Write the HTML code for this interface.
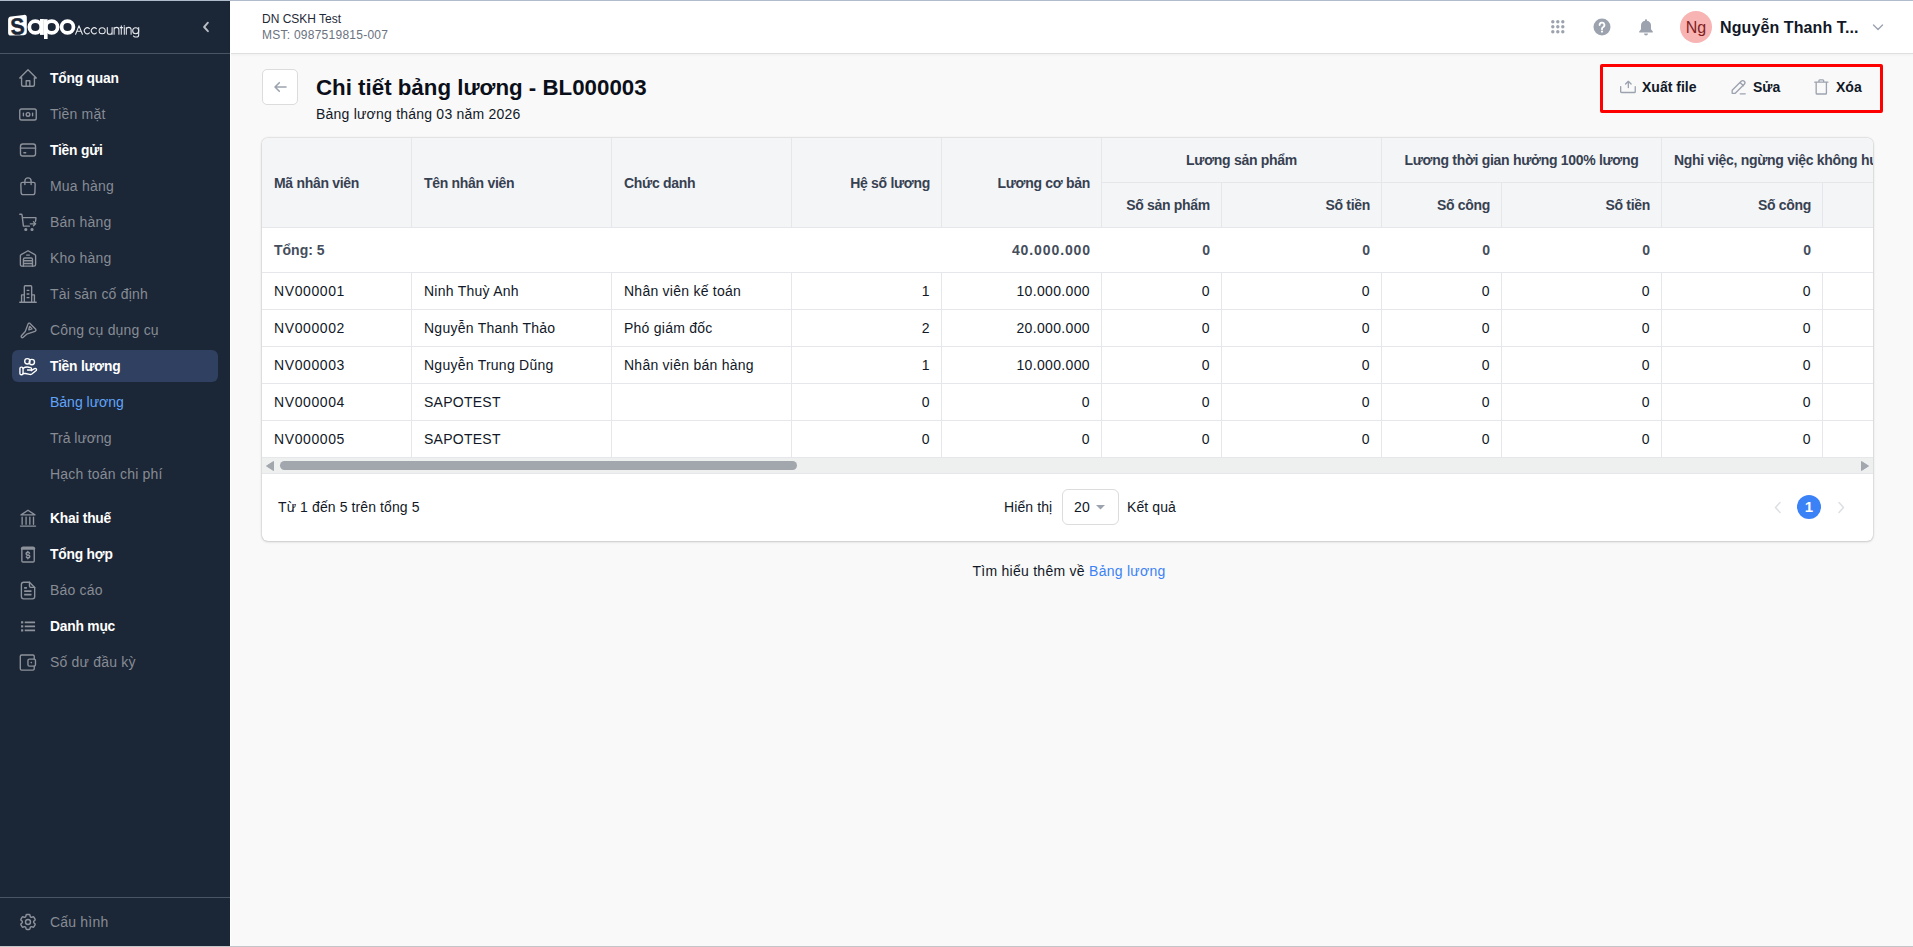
<!DOCTYPE html>
<html><head><meta charset="utf-8">
<style>
*{box-sizing:border-box;margin:0;padding:0}
html,body{width:1913px;height:947px;overflow:hidden}
body{font-family:"Liberation Sans",sans-serif;background:#f9f9f9;position:relative;color:#111827}
.abs{position:absolute}
.topline{position:absolute;left:0;top:0;width:1913px;height:1px;background:#b0bccc;z-index:10}
#sb{position:absolute;left:0;top:0;width:230px;height:947px;background:#1b2636}
#sb .logo{position:absolute;left:0;top:0;width:230px;height:54px;border-bottom:1px solid #4b5462}
#sb .item{position:absolute;left:12px;width:206px;height:32px;border-radius:6px}
#sb .item svg{position:absolute;left:5px;top:4.5px;width:22px;height:22px;fill:none;stroke:#8d929b;stroke-width:1.5;stroke-linecap:round;stroke-linejoin:round}
#sb .item span{position:absolute;left:38px;top:8px;font-size:14px;line-height:16px;white-space:nowrap}
#sb .w span{color:#fff;font-weight:700;font-size:13.8px;letter-spacing:-0.2px;top:8.6px}
#sb .g span{color:#878c95;letter-spacing:0.2px}
#sb .act{background:#2f4060}
#sb .act svg{stroke:#fff}
#sb .sub span{color:#878c95;left:38px}
#sb .sub.on span{color:#60a5fa}
#hd{position:absolute;left:230px;top:0;width:1683px;height:54px;background:#fff;border-bottom:1px solid #dfdfdf;border-left:1px solid #fff;box-shadow:0 1px 3px rgba(0,0,0,.045)}

#main .ic{fill:none;stroke:#9ca3af;stroke-width:1.6;stroke-linecap:round;stroke-linejoin:round}
#main .act{top:78px;font-size:14px;line-height:18px;font-weight:700;color:#111827;white-space:nowrap}

#card{background:#fff;border-radius:6px;overflow:hidden;box-shadow:0 0 2px rgba(0,0,0,.28),0 1px 3px rgba(0,0,0,.12)}
#card .bd{background:#e5e7eb}
#card .th{font-size:14px;line-height:18px;font-weight:700;color:#374151;white-space:nowrap;letter-spacing:-0.3px}
#card .tt{font-size:14px;line-height:18px;font-weight:700;color:#454e5c;white-space:nowrap}
#card .td{font-size:14px;line-height:18px;color:#111827;white-space:nowrap;letter-spacing:0.25px}
#card .nv{letter-spacing:0.6px}
#card .nm{letter-spacing:0.35px}
#card .ft{font-size:14px;line-height:18px;color:#111827;white-space:nowrap;letter-spacing:0.1px}
</style></head><body>
<div class="topline"></div>
<div class="abs" style="left:230px;top:0;width:1px;height:947px;background:#fff;z-index:5"></div>
<div class="abs" style="left:0;top:946px;width:1913px;height:1px;background:#c2c6c9;z-index:10"></div>
<div id="sb">
  <div class="logo">
    <svg class="abs" style="left:0;top:0" width="80" height="45" viewBox="0 0 80 45">
      <path d="M11.1 16.6 L23.8 14.9 Q26.8 14.5 26.8 17.5 L26.8 32.1 Q26.8 35.1 23.8 35.2 L11.1 35.6 Q8.1 35.7 8.1 32.7 L8.1 19.7 Q8.1 17 11.1 16.6 Z" fill="#fff"/>
      <text x="9.8" y="34.3" font-family="Liberation Sans" font-weight="700" font-size="23" fill="#1b2636" stroke="#1b2636" stroke-width="0.5" transform="translate(17 26) rotate(-4) scale(0.92 1) translate(-17 -26)">S</text>
      <g fill="none" stroke="#fff" stroke-width="3.7"><circle cx="35.3" cy="27" r="5.95"/><circle cx="51.7" cy="27" r="5.95"/><circle cx="67.5" cy="27" r="5.95"/></g>
      <rect x="40" y="19" width="3.9" height="15.9" fill="#fff"/><rect x="44" y="19.2" width="3.6" height="19.8" fill="#fff"/>
    </svg>
    <svg class="abs" style="left:70px;top:18px" width="75" height="24" viewBox="70 18 75 24"><g fill="none" stroke="#e9ebef" stroke-width="1.05" stroke-linecap="round" stroke-linejoin="round"><path d="M75.6 34.3L79 25.7l3.4 8.6M76.8 31.3h4.4"/><path d="M89.4 28.6A3 3 0 1 0 89.4 32.9"/><path d="M96.4 28.6A3 3 0 1 0 96.4 32.9"/><circle cx="102.15" cy="30.75" r="3.05"/><path d="M107.3 27.4v4.5a2.4 2.4 0 0 0 4.8 0v-4.5M112.1 31.9v2.4"/><path d="M114.1 34.3v-6.9M114.1 29.8a2.4 2.4 0 0 1 4.8 0v4.5"/><path d="M121.3 25.7v8.6M120.1 27.6h2.5"/><path d="M124.3 27.6v6.7"/><path d="M126.3 34.3v-6.9M126.3 29.8a2.4 2.4 0 0 1 4.8 0v4.5"/><circle cx="135.7" cy="30.75" r="3"/><path d="M138.7 27.4v7.5a2.2 2.2 0 0 1-2.2 2.1h-1.2a2.1 2.1 0 0 1-1.8-1"/></g><circle cx="124.3" cy="25.9" r=".7" fill="#e9ebef"/></svg>
    <svg class="abs" style="left:201px;top:20px" width="10" height="14" viewBox="0 0 10 14"><path d="M6.9 2.7L3.1 7l3.8 4.2" fill="none" stroke="#b9bdc4" stroke-width="1.9" stroke-linecap="round" stroke-linejoin="round"/></svg>
  </div>
<div class="item w" style="top:62px"><svg viewBox="0 0 24 24"><path d="M5 12H3l9-9 9 9h-2"/><path d="M5 12v7a2 2 0 0 0 2 2h10a2 2 0 0 0 2-2v-7"/><path d="M10 21v-6h4v6"/></svg><span>Tổng quan</span></div>
<div class="item g" style="top:98px"><svg viewBox="0 0 24 24"><rect x="3" y="6.5" width="18" height="12" rx="2"/><circle cx="12" cy="12.5" r="2"/><path d="M7 11v3M17 11v3"/></svg><span>Tiền mặt</span></div>
<div class="item w" style="top:134px"><svg viewBox="0 0 24 24"><rect x="3.8" y="5.5" width="16.4" height="13" rx="2.5"/><path d="M3.8 10h16.4M7.5 15h2"/></svg><span>Tiền gửi</span></div>
<div class="item g" style="top:170px"><svg viewBox="0 0 24 24"><path d="M6 8h12a1.8 1.8 0 0 1 1.8 1.8L19.5 19a2.4 2.4 0 0 1-2.4 2.4H6.9A2.4 2.4 0 0 1 4.5 19L4.2 9.8A1.8 1.8 0 0 1 6 8z"/><path d="M8.6 10.4V6.5a3.4 3.4 0 0 1 6.8 0v3.9"/></svg><span>Mua hàng</span></div>
<div class="item g" style="top:206px"><svg viewBox="0 0 24 24"><path d="M3 3.6h1.5a1 1 0 0 1 1 .9L7 16.5h6.5M5.8 7.2h14.4a.5.5 0 0 1 .5.6l-.5 3.5M14.5 14h5.8M18 11.8l2.3 2.2-2.3 2.2"/><circle cx="9.6" cy="20.2" r="1" fill="#8d929b"/><circle cx="16.4" cy="20.2" r="1" fill="#8d929b"/></svg><span>Bán hàng</span></div>
<div class="item g" style="top:242px"><svg viewBox="0 0 24 24"><path d="M3.7 19V9.6a1.5 1.5 0 0 1 .8-1.3L12 4.1l7.5 4.2a1.5 1.5 0 0 1 .8 1.3V19a1.9 1.9 0 0 1-1.9 1.9H5.6A1.9 1.9 0 0 1 3.7 19z"/><path d="M7 20.9V13.5a1.5 1.5 0 0 1 1.5-1.5h6.9a1.5 1.5 0 0 1 1.5 1.5v7.4M7 15h9.9M7 18h9.9M10.5 8.8h3"/></svg><span>Kho hàng</span></div>
<div class="item g" style="top:278px"><svg viewBox="0 0 24 24"><path d="M3 21h18"/><path d="M5 21V13h3M19 21v-8h-3"/><path d="M8 21V4a1 1 0 0 1 1-1h6a1 1 0 0 1 1 1v17"/><path d="M11 8h2M11 12h2M11 16h2"/></svg><span>Tài sản cố định</span></div>
<div class="item g" style="top:314px"><svg viewBox="0 0 24 24"><path d="M14.2 4.8Q12.8 4 12 5.6L9 13.6 4.8 18.3A1.3 1.3 0 0 0 6.5 20.2L10.6 16.6 19.6 13.4Q21.4 12.4 20.2 10.8Z"/><path d="M13.7 8l2.6 2.8-3.4.9z"/></svg><span>Công cụ dụng cụ</span></div>
<div class="item w act" style="top:350px"><svg viewBox="0 0 24 24"><circle cx="11.3" cy="6.9" r="2.9"/><circle cx="16.2" cy="7.7" r="2.9"/><rect x="3.2" y="13.2" width="3.4" height="8.4" rx="1.5"/><path d="M6.6 14.6c2-1.4 4.2-1.8 6.4-1.2l1.8.4a1.3 1.3 0 0 1-.4 2.6H11.5"/><path d="M6.6 20.2h2.6l4.6 1a3 3 0 0 0 2.4-.5l4.8-3.8a1.4 1.4 0 0 0-1.9-2l-3.6 2.2"/></svg><span>Tiền lương</span></div>
<div class="item sub on" style="top:386px"><span>Bảng lương</span></div>
<div class="item sub" style="top:422px"><span>Trả lương</span></div>
<div class="item sub" style="top:458px"><span style="letter-spacing:0.22px">Hạch toán chi phí</span></div>
<div class="item w" style="top:502px"><svg viewBox="0 0 24 24"><path d="M3.8 20.8h16.4M4.4 8.6L12 3.6l7.6 5z"/><path d="M5.6 11v7.8M9.9 11v7.8M14 11v7.8M18 11v7.8"/></svg><span>Khai thuế</span></div>
<div class="item w" style="top:538px"><svg viewBox="0 0 24 24"><rect x="5.3" y="4.6" width="13.5" height="16.1" rx="1.2"/><path d="M5.3 6.1h13.5" stroke-width="2.4"/><path d="M13.6 11.2a1.7 1.7 0 0 0-1.6-1h-.5a1.5 1.5 0 0 0 0 3h.9a1.5 1.5 0 0 1 0 3h-.6a1.7 1.7 0 0 1-1.6-1M11.8 9.2v1M11.8 16.2v1" stroke-width="1.7"/></svg><span>Tổng hợp</span></div>
<div class="item g" style="top:574px"><svg viewBox="0 0 24 24"><path d="M13.6 3.6H7.3a2.5 2.5 0 0 0-2.5 2.5v13.1a2.5 2.5 0 0 0 2.5 2.5h9.5a2.5 2.5 0 0 0 2.5-2.5V9.2z"/><path d="M13.6 3.6v4.1a1.5 1.5 0 0 0 1.5 1.5h4.2"/><path d="M7.8 9.6h3M7.8 13.3h8M7.8 17h8" stroke-width="1.8" stroke-linecap="butt"/></svg><span>Báo cáo</span></div>
<div class="item w" style="top:610px"><svg viewBox="0 0 24 24"><path d="M8.4 8h11.3M8.4 12.4h11.3M8.4 16.8h11.3" stroke-width="2" stroke-linecap="butt"/><g fill="#8d929b" stroke="none"><rect x="4.4" y="6.8" width="2.4" height="2.4"/><rect x="4.4" y="11.2" width="2.4" height="2.4"/><rect x="4.4" y="15.6" width="2.4" height="2.4"/></g></svg><span>Danh mục</span></div>
<div class="item g" style="top:646px"><svg viewBox="0 0 24 24"><path d="M18.8 8.8V5.8a1.5 1.5 0 0 0-1.5-1.5H5.1A1.5 1.5 0 0 0 3.6 5.8v13.5a1.5 1.5 0 0 0 1.5 1.5h12.2a1.5 1.5 0 0 0 1.5-1.5v-2.8"/><rect x="11.95" y="8.8" width="8.2" height="7.7" rx="1.5"/><circle cx="15.6" cy="12.65" r=".9" fill="#8d929b" stroke="none"/></svg><span>Số dư đầu kỳ</span></div>
<div class="item g" style="top:906px"><svg viewBox="0 0 24 24" style="left:6px;top:6px;width:20px;height:20px;stroke-width:1.7"><path d="M9.594 3.94c.09-.542.56-.94 1.11-.94h2.593c.55 0 1.02.398 1.11.94l.213 1.281c.063.374.313.686.645.87.074.04.147.083.22.127.325.196.72.257 1.075.124l1.217-.456a1.125 1.125 0 0 1 1.37.49l1.296 2.247a1.125 1.125 0 0 1-.26 1.431l-1.003.827c-.293.241-.438.613-.43.992a7.723 7.723 0 0 1 0 .255c-.008.378.137.75.43.991l1.004.827c.424.35.534.955.26 1.43l-1.298 2.247a1.125 1.125 0 0 1-1.369.491l-1.217-.456c-.355-.133-.75-.072-1.076.124a6.470 6.470 0 0 1-.22.128c-.331.183-.581.495-.644.869l-.213 1.281c-.09.543-.56.94-1.11.94h-2.594c-.55 0-1.019-.398-1.11-.94l-.213-1.281c-.062-.374-.312-.686-.644-.87a6.520 6.520 0 0 1-.22-.127c-.325-.196-.72-.257-1.076-.124l-1.217.456a1.125 1.125 0 0 1-1.369-.49l-1.297-2.247a1.125 1.125 0 0 1 .26-1.431l1.004-.827c.292-.24.437-.613.43-.991a6.932 6.932 0 0 1 0-.255c.007-.38-.138-.751-.43-.992l-1.004-.827a1.125 1.125 0 0 1-.26-1.430l1.297-2.247a1.125 1.125 0 0 1 1.37-.491l1.216.456c.356.133.751.072 1.076-.124.072-.044.146-.086.22-.128.332-.183.582-.495.644-.869l.214-1.280z"/><circle cx="12" cy="12" r="3"/></svg><span>Cấu hình</span></div>
<div class="abs" style="left:0;top:897px;width:230px;height:1px;background:#4b5462"></div>
</div>
<div id="hd">
  <div class="abs" style="left:31px;top:12px;font-size:12px;line-height:14px;color:#1f2937">DN CSKH Test</div>
  <div class="abs" style="left:31px;top:28px;font-size:12px;line-height:14px;color:#6b7280;letter-spacing:0.25px">MST: 0987519815-007</div>
  <svg class="abs" style="left:1320px;top:20px" width="14" height="14" viewBox="0 0 14 14" fill="#9ca3af"><circle cx="1.8" cy="1.8" r="1.7"/><circle cx="6.8" cy="1.8" r="1.7"/><circle cx="11.8" cy="1.8" r="1.7"/><circle cx="1.8" cy="6.8" r="1.7"/><circle cx="6.8" cy="6.8" r="1.7"/><circle cx="11.8" cy="6.8" r="1.7"/><circle cx="1.8" cy="11.8" r="1.7"/><circle cx="6.8" cy="11.8" r="1.7"/><circle cx="11.8" cy="11.8" r="1.7"/></svg>
  <svg class="abs" style="left:1362px;top:18px" width="18" height="18" viewBox="0 0 18 18"><circle cx="9" cy="9" r="8.5" fill="#9ca3af"/><path d="M6.6 7a2.4 2.4 0 1 1 3.4 2.2c-.6.3-1 .8-1 1.4v.6" fill="none" stroke="#fff" stroke-width="1.8" stroke-linecap="round"/><circle cx="9" cy="13.6" r="1.1" fill="#fff"/></svg>
  <svg class="abs" style="left:1407px;top:18px" width="16" height="18" viewBox="0 0 16 18" fill="#9ca3af"><path d="M8 1.2c.6 0 1 .4 1 1v.5a5 5 0 0 1 4 4.9v3.6l1.8 2.3c.3.4 0 1-.5 1H1.7c-.5 0-.8-.6-.5-1L3 11.2V7.6a5 5 0 0 1 4-4.9v-.5c0-.6.4-1 1-1z"/><path d="M6 15.4h4a2 2 0 0 1-4 0z"/></svg>
  <div class="abs" style="left:1449px;top:11px;width:32px;height:32px;border-radius:50%;background:#f8b3b3;color:#7f1d1d;font-size:16px;line-height:34px;text-align:center">Ng</div>
  <div class="abs" style="left:1489px;top:18px;font-size:16px;line-height:20px;font-weight:700;color:#111827;white-space:nowrap;letter-spacing:0.1px">Nguyễn Thanh T...</div>
  <svg class="abs" style="left:1641px;top:22px" width="12" height="10" viewBox="0 0 12 10"><path d="M1.5 3l4.5 4.5L10.5 3" fill="none" stroke="#9ca3af" stroke-width="1.4" stroke-linecap="round" stroke-linejoin="round"/></svg>
</div>
<div id="main">
  <div class="abs backbtn" style="left:262px;top:69px;width:36px;height:36px;border:1px solid #dcdcdc;border-radius:5px;background:#fff">
    <svg class="abs" style="left:10px;top:10px" width="14" height="14" viewBox="0 0 14 14"><path d="M13 7H2M6.3 2.7L2 7l4.3 4.3" fill="none" stroke="#9ca3af" stroke-width="1.6" stroke-linecap="round" stroke-linejoin="round"/></svg>
  </div>
  <div class="abs" style="left:316px;top:74px;font-size:22.3px;line-height:28px;font-weight:700;color:#0b0f19;white-space:nowrap">Chi tiết bảng lương - BL000003</div>
  <div class="abs" style="left:316px;top:105px;font-size:14px;line-height:18px;color:#111827;white-space:nowrap;letter-spacing:0.22px">Bảng lương tháng 03 năm 2026</div>
  <div class="abs" style="left:1600px;top:64px;width:283px;height:49px;border:3px solid #f00;border-radius:2px"></div>
  <svg class="abs ic" style="left:1618px;top:77px" width="20" height="20" viewBox="0 0 24 24"><path d="M3.2 11.5v6.1a1 1 0 0 0 1 1h15.5a1 1 0 0 0 1-1v-6.1M12.4 12.7V5.2M9.1 8.5l3.3-3.3 3.3 3.3"/></svg>
  <div class="abs act" style="left:1642px">Xuất file</div>
  <svg class="abs ic" style="left:1729px;top:77px" width="20" height="20" viewBox="0 0 24 24"><path d="M4.3 19.6h3.2L18.3 8.8a2.6 2.6 0 0 0-3.7-3.7L3.8 15.9v3.7M13.3 6.5l4 4M13.5 20.2h6"/></svg>
  <div class="abs act" style="left:1753px">Sửa</div>
  <svg class="abs ic" style="left:1811px;top:77px" width="20" height="20" viewBox="0 0 24 24"><path d="M4.5 6.2h15.8M9.5 6.2V4.5a1 1 0 0 1 1-1h3.7a1 1 0 0 1 1 1v1.7M6.2 6.2v13.2a1 1 0 0 0 1 1h10.3a1 1 0 0 0 1-1V6.2"/></svg>
  <div class="abs act" style="left:1836px">Xóa</div>
</div>
<div id="card" class="abs" style="left:262px;top:138px;width:1611px;height:403px">
<div class="abs" style="left:0;top:0;width:1611px;height:90px;background:#f4f5f7"></div>
<div class="abs bd" style="left:0;top:89px;width:1611px;height:1px"></div>
<div class="abs bd" style="left:840px;top:44px;width:771px;height:1px"></div>
<div class="abs bd" style="left:149px;top:0;width:1px;height:89px"></div>
<div class="abs bd" style="left:349px;top:0;width:1px;height:89px"></div>
<div class="abs bd" style="left:529px;top:0;width:1px;height:89px"></div>
<div class="abs bd" style="left:679px;top:0;width:1px;height:89px"></div>
<div class="abs bd" style="left:839px;top:0;width:1px;height:89px"></div>
<div class="abs bd" style="left:959px;top:45px;width:1px;height:44px"></div>
<div class="abs bd" style="left:1119px;top:0;width:1px;height:89px"></div>
<div class="abs bd" style="left:1239px;top:45px;width:1px;height:44px"></div>
<div class="abs bd" style="left:1399px;top:0;width:1px;height:89px"></div>
<div class="abs bd" style="left:1560px;top:45px;width:1px;height:44px"></div>
<div class="abs th" style="left:12px;top:36px;width:449px;text-align:left">Mã nhân viên</div>
<div class="abs th" style="left:162px;top:36px;width:499px;text-align:left">Tên nhân viên</div>
<div class="abs th" style="left:362px;top:36px;width:479px;text-align:left">Chức danh</div>
<div class="abs th" style="left:530px;top:36px;width:138px;text-align:right">Hệ số lương</div>
<div class="abs th" style="left:680px;top:36px;width:148px;text-align:right">Lương cơ bản</div>
<div class="abs th" style="left:840px;top:13px;width:279px;text-align:center">Lương sản phẩm</div>
<div class="abs th" style="left:1120px;top:13px;width:279px;text-align:center">Lương thời gian hưởng 100% lương</div>
<div class="abs th" style="left:1412px;top:13px;width:538px;text-align:left">Nghỉ việc, ngừng việc không hưởng lương</div>
<div class="abs th" style="left:840px;top:58px;width:108px;text-align:right">Số sản phẩm</div>
<div class="abs th" style="left:960px;top:58px;width:148px;text-align:right">Số tiền</div>
<div class="abs th" style="left:1120px;top:58px;width:108px;text-align:right">Số công</div>
<div class="abs th" style="left:1240px;top:58px;width:148px;text-align:right">Số tiền</div>
<div class="abs th" style="left:1400px;top:58px;width:149px;text-align:right">Số công</div>
<div class="abs bd" style="left:0;top:134px;width:1611px;height:1px"></div>
<div class="abs tt" style="left:12px;top:103px">Tổng: 5</div>
<div class="abs tt" style="left:680px;top:103px;width:149px;text-align:right;letter-spacing:0.9px">40.000.000</div>
<div class="abs tt" style="left:840px;top:103px;width:109px;text-align:right;letter-spacing:0.9px">0</div>
<div class="abs tt" style="left:960px;top:103px;width:149px;text-align:right;letter-spacing:0.9px">0</div>
<div class="abs tt" style="left:1120px;top:103px;width:109px;text-align:right;letter-spacing:0.9px">0</div>
<div class="abs tt" style="left:1240px;top:103px;width:149px;text-align:right;letter-spacing:0.9px">0</div>
<div class="abs tt" style="left:1400px;top:103px;width:150px;text-align:right;letter-spacing:0.9px">0</div>
<div class="abs td nv" style="left:12px;top:144px">NV000001</div>
<div class="abs td" style="left:162px;top:144px">Ninh Thuỳ Anh</div>
<div class="abs td" style="left:362px;top:144px">Nhân viên kế toán</div>
<div class="abs td nm" style="left:530px;top:144px;width:138px;text-align:right">1</div>
<div class="abs td nm" style="left:680px;top:144px;width:148px;text-align:right">10.000.000</div>
<div class="abs td nm" style="left:840px;top:144px;width:108px;text-align:right">0</div>
<div class="abs td nm" style="left:960px;top:144px;width:148px;text-align:right">0</div>
<div class="abs td nm" style="left:1120px;top:144px;width:108px;text-align:right">0</div>
<div class="abs td nm" style="left:1240px;top:144px;width:148px;text-align:right">0</div>
<div class="abs td nm" style="left:1400px;top:144px;width:149px;text-align:right">0</div>
<div class="abs bd" style="left:149px;top:135px;width:1px;height:37px"></div>
<div class="abs bd" style="left:349px;top:135px;width:1px;height:37px"></div>
<div class="abs bd" style="left:529px;top:135px;width:1px;height:37px"></div>
<div class="abs bd" style="left:679px;top:135px;width:1px;height:37px"></div>
<div class="abs bd" style="left:839px;top:135px;width:1px;height:37px"></div>
<div class="abs bd" style="left:959px;top:135px;width:1px;height:37px"></div>
<div class="abs bd" style="left:1119px;top:135px;width:1px;height:37px"></div>
<div class="abs bd" style="left:1239px;top:135px;width:1px;height:37px"></div>
<div class="abs bd" style="left:1399px;top:135px;width:1px;height:37px"></div>
<div class="abs bd" style="left:1560px;top:135px;width:1px;height:37px"></div>
<div class="abs bd" style="left:0;top:171px;width:1611px;height:1px"></div>
<div class="abs td nv" style="left:12px;top:181px">NV000002</div>
<div class="abs td" style="left:162px;top:181px">Nguyễn Thanh Thảo</div>
<div class="abs td" style="left:362px;top:181px">Phó giám đốc</div>
<div class="abs td nm" style="left:530px;top:181px;width:138px;text-align:right">2</div>
<div class="abs td nm" style="left:680px;top:181px;width:148px;text-align:right">20.000.000</div>
<div class="abs td nm" style="left:840px;top:181px;width:108px;text-align:right">0</div>
<div class="abs td nm" style="left:960px;top:181px;width:148px;text-align:right">0</div>
<div class="abs td nm" style="left:1120px;top:181px;width:108px;text-align:right">0</div>
<div class="abs td nm" style="left:1240px;top:181px;width:148px;text-align:right">0</div>
<div class="abs td nm" style="left:1400px;top:181px;width:149px;text-align:right">0</div>
<div class="abs bd" style="left:149px;top:172px;width:1px;height:37px"></div>
<div class="abs bd" style="left:349px;top:172px;width:1px;height:37px"></div>
<div class="abs bd" style="left:529px;top:172px;width:1px;height:37px"></div>
<div class="abs bd" style="left:679px;top:172px;width:1px;height:37px"></div>
<div class="abs bd" style="left:839px;top:172px;width:1px;height:37px"></div>
<div class="abs bd" style="left:959px;top:172px;width:1px;height:37px"></div>
<div class="abs bd" style="left:1119px;top:172px;width:1px;height:37px"></div>
<div class="abs bd" style="left:1239px;top:172px;width:1px;height:37px"></div>
<div class="abs bd" style="left:1399px;top:172px;width:1px;height:37px"></div>
<div class="abs bd" style="left:1560px;top:172px;width:1px;height:37px"></div>
<div class="abs bd" style="left:0;top:208px;width:1611px;height:1px"></div>
<div class="abs td nv" style="left:12px;top:218px">NV000003</div>
<div class="abs td" style="left:162px;top:218px">Nguyễn Trung Dũng</div>
<div class="abs td" style="left:362px;top:218px">Nhân viên bán hàng</div>
<div class="abs td nm" style="left:530px;top:218px;width:138px;text-align:right">1</div>
<div class="abs td nm" style="left:680px;top:218px;width:148px;text-align:right">10.000.000</div>
<div class="abs td nm" style="left:840px;top:218px;width:108px;text-align:right">0</div>
<div class="abs td nm" style="left:960px;top:218px;width:148px;text-align:right">0</div>
<div class="abs td nm" style="left:1120px;top:218px;width:108px;text-align:right">0</div>
<div class="abs td nm" style="left:1240px;top:218px;width:148px;text-align:right">0</div>
<div class="abs td nm" style="left:1400px;top:218px;width:149px;text-align:right">0</div>
<div class="abs bd" style="left:149px;top:209px;width:1px;height:37px"></div>
<div class="abs bd" style="left:349px;top:209px;width:1px;height:37px"></div>
<div class="abs bd" style="left:529px;top:209px;width:1px;height:37px"></div>
<div class="abs bd" style="left:679px;top:209px;width:1px;height:37px"></div>
<div class="abs bd" style="left:839px;top:209px;width:1px;height:37px"></div>
<div class="abs bd" style="left:959px;top:209px;width:1px;height:37px"></div>
<div class="abs bd" style="left:1119px;top:209px;width:1px;height:37px"></div>
<div class="abs bd" style="left:1239px;top:209px;width:1px;height:37px"></div>
<div class="abs bd" style="left:1399px;top:209px;width:1px;height:37px"></div>
<div class="abs bd" style="left:1560px;top:209px;width:1px;height:37px"></div>
<div class="abs bd" style="left:0;top:245px;width:1611px;height:1px"></div>
<div class="abs td nv" style="left:12px;top:255px">NV000004</div>
<div class="abs td" style="left:162px;top:255px">SAPOTEST</div>
<div class="abs td nm" style="left:530px;top:255px;width:138px;text-align:right">0</div>
<div class="abs td nm" style="left:680px;top:255px;width:148px;text-align:right">0</div>
<div class="abs td nm" style="left:840px;top:255px;width:108px;text-align:right">0</div>
<div class="abs td nm" style="left:960px;top:255px;width:148px;text-align:right">0</div>
<div class="abs td nm" style="left:1120px;top:255px;width:108px;text-align:right">0</div>
<div class="abs td nm" style="left:1240px;top:255px;width:148px;text-align:right">0</div>
<div class="abs td nm" style="left:1400px;top:255px;width:149px;text-align:right">0</div>
<div class="abs bd" style="left:149px;top:246px;width:1px;height:37px"></div>
<div class="abs bd" style="left:349px;top:246px;width:1px;height:37px"></div>
<div class="abs bd" style="left:529px;top:246px;width:1px;height:37px"></div>
<div class="abs bd" style="left:679px;top:246px;width:1px;height:37px"></div>
<div class="abs bd" style="left:839px;top:246px;width:1px;height:37px"></div>
<div class="abs bd" style="left:959px;top:246px;width:1px;height:37px"></div>
<div class="abs bd" style="left:1119px;top:246px;width:1px;height:37px"></div>
<div class="abs bd" style="left:1239px;top:246px;width:1px;height:37px"></div>
<div class="abs bd" style="left:1399px;top:246px;width:1px;height:37px"></div>
<div class="abs bd" style="left:1560px;top:246px;width:1px;height:37px"></div>
<div class="abs bd" style="left:0;top:282px;width:1611px;height:1px"></div>
<div class="abs td nv" style="left:12px;top:292px">NV000005</div>
<div class="abs td" style="left:162px;top:292px">SAPOTEST</div>
<div class="abs td nm" style="left:530px;top:292px;width:138px;text-align:right">0</div>
<div class="abs td nm" style="left:680px;top:292px;width:148px;text-align:right">0</div>
<div class="abs td nm" style="left:840px;top:292px;width:108px;text-align:right">0</div>
<div class="abs td nm" style="left:960px;top:292px;width:148px;text-align:right">0</div>
<div class="abs td nm" style="left:1120px;top:292px;width:108px;text-align:right">0</div>
<div class="abs td nm" style="left:1240px;top:292px;width:148px;text-align:right">0</div>
<div class="abs td nm" style="left:1400px;top:292px;width:149px;text-align:right">0</div>
<div class="abs bd" style="left:149px;top:283px;width:1px;height:37px"></div>
<div class="abs bd" style="left:349px;top:283px;width:1px;height:37px"></div>
<div class="abs bd" style="left:529px;top:283px;width:1px;height:37px"></div>
<div class="abs bd" style="left:679px;top:283px;width:1px;height:37px"></div>
<div class="abs bd" style="left:839px;top:283px;width:1px;height:37px"></div>
<div class="abs bd" style="left:959px;top:283px;width:1px;height:37px"></div>
<div class="abs bd" style="left:1119px;top:283px;width:1px;height:37px"></div>
<div class="abs bd" style="left:1239px;top:283px;width:1px;height:37px"></div>
<div class="abs bd" style="left:1399px;top:283px;width:1px;height:37px"></div>
<div class="abs bd" style="left:1560px;top:283px;width:1px;height:37px"></div>
<div class="abs" style="left:0;top:319px;width:1611px;height:17px;background:#eeefef;border-top:1px solid #e6e7ea;border-bottom:1px solid #e6e7ea"></div>
<svg class="abs" style="left:4px;top:323px" width="8" height="10" viewBox="0 0 8 10"><path d="M7.5 0.5v9L0.5 5z" fill="#a2a6ad" stroke="#a2a6ad" stroke-linejoin="round"/></svg>
<div class="abs" style="left:18px;top:323px;width:517px;height:9px;border-radius:5px;background:#a2a6ad"></div>
<svg class="abs" style="left:1599px;top:323px" width="8" height="10" viewBox="0 0 8 10"><path d="M0.5 0.5v9L7.5 5z" fill="#a2a6ad" stroke="#a2a6ad" stroke-linejoin="round"/></svg>
<div class="abs ft" style="left:16px;top:360px">Từ 1 đến 5 trên tổng 5</div>
<div class="abs ft" style="left:742px;top:360px">Hiển thị</div>
<div class="abs" style="left:800px;top:351px;width:57px;height:36px;border:1px solid #dcdcdc;border-radius:6px;background:#fff"></div>
<div class="abs ft" style="left:812px;top:360px">20</div>
<svg class="abs" style="left:834px;top:367px" width="9" height="5" viewBox="0 0 9 5"><path d="M0 0h9L4.5 4.5z" fill="#9ca3af"/></svg>
<div class="abs ft" style="left:865px;top:360px">Kết quả</div>
<svg class="abs" style="left:1511px;top:363px" width="10" height="13" viewBox="0 0 10 13"><path d="M7 1.5L2.5 6.5 7 11.5" fill="none" stroke="#dcdfe4" stroke-width="1.5" stroke-linecap="round" stroke-linejoin="round"/></svg>
<div class="abs" style="left:1535px;top:357px;width:24px;height:24px;border-radius:50%;background:#3b82f6;color:#fff;font-size:15px;font-weight:700;line-height:24px;text-align:center">1</div>
<svg class="abs" style="left:1574px;top:363px" width="10" height="13" viewBox="0 0 10 13"><path d="M3 1.5L7.5 6.5 3 11.5" fill="none" stroke="#dcdfe4" stroke-width="1.5" stroke-linecap="round" stroke-linejoin="round"/></svg>
</div>
<div class="abs" style="left:0;top:562px;width:1913px;padding-left:230px;padding-right:5px;text-align:center;font-size:14px;line-height:18px;color:#111827;white-space:nowrap;letter-spacing:0.27px">Tìm hiểu thêm về <span style="color:#3b82f6">Bảng lương</span></div>
</body></html>
